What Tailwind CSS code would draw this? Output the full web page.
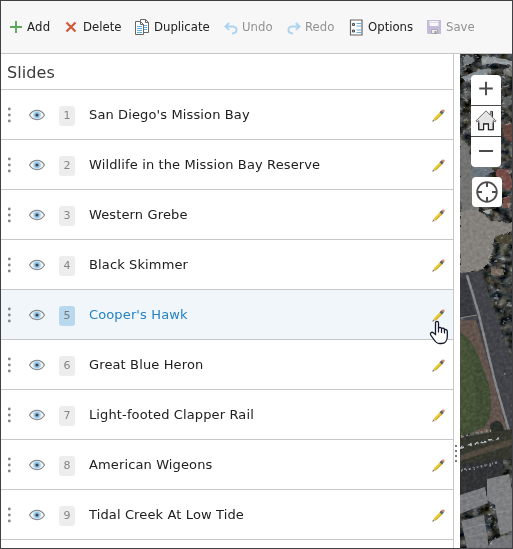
<!DOCTYPE html>
<html lang="en">
<head>
<meta charset="utf-8">
<title>Slides</title>
<script src="https://cdn.jsdelivr.net/npm/@tailwindcss/browser@4"></script>
</head>
<body class="w-[513px] h-[549px] overflow-hidden bg-white">
<svg width="0" height="0" class="absolute">
  <symbol id="dots" viewBox="0 0 4 16"><g fill="#858585"><circle cx="2.300" cy="2" r="1.400"/><circle cx="2.300" cy="8" r="1.400"/><circle cx="2.300" cy="14" r="1.400"/></g></symbol>
  <symbol id="eye" viewBox="0 0 18 14"><path d="M1.500 7C5 .8 13 .8 16.500 7C13 13.200 5 13.200 1.500 7Z" fill="#fafafa" stroke="#858585" stroke-width="1.100"/><circle cx="9" cy="7" r="4.200" fill="#b9dcf3"/><circle cx="9" cy="7" r="2.900" fill="#92c5e9"/><circle cx="9" cy="7" r="1.600" fill="#454545"/></symbol>
  <symbol id="pencil" viewBox="0 0 14 14"><path d="M.6 13.400L2 9.900L4.200 12Z" fill="#d9b9a0"/><path d="M.4 13.600L1.200 11.600L2.300 12.800Z" fill="#555"/><path d="M1.800 10.200L8.900 2.900L11.300 5.300L4.100 12.300Z" fill="#e6cc35"/><path d="M3.500 11.700L10.700 4.700L11.300 5.300L4.100 12.300Z" fill="#c9a92b"/><path d="M8.100 3.400L10.200 1.400L12.800 3.800L10.700 5.900Z" fill="#5b6270"/><path d="M10.200 1.400Q11.500 0 13.100 .8Q14.300 2 12.800 3.800Z" fill="#e08766"/></symbol>
</svg>
<div class="w-[513px] h-[549px] border border-[#414045] flex flex-col text-[#212121] [font-family:'DejaVu_Sans',Verdana,sans-serif]">
  <header class="h-[53px] shrink-0 bg-[#f7f7f7] border-b border-[#c6c6c6] flex items-center text-[13px] pl-2 [font-family:'DejaVu_Sans_Condensed','DejaVu_Sans',sans-serif] [font-stretch:condensed] whitespace-nowrap">
    <div class="w-[56px] flex items-center tracking-[.3px]"><svg class="w-[14px] h-[14px] mr-[4px] shrink-0" viewBox="0 0 14 14"><path d="M7 1V13M1 7H13" stroke="#59a85c" stroke-width="1.900"/></svg>Add</div>
    <div class="w-[69px] flex items-center"><svg class="w-[12px] h-[12px] mr-[6px] shrink-0" viewBox="0 0 12 12"><path d="M1.500 1.500L10.500 10.500M10.500 1.500L1.500 10.500" stroke="#cf5b3c" stroke-width="2.300"/></svg>Delete</div>
    <div class="w-[90px] flex items-center"><svg class="w-[16px] h-[18px] mr-[4px] shrink-0" viewBox="0 0 16 18"><path d="M6.500 1.500H11.500L14.500 4.500V14.500H6.500Z" fill="#fff" stroke="#666"/><path d="M11.500 1.500V4.500H14.500" fill="none" stroke="#666"/><path d="M10 7.500H13M10 9.500H13M10 11.500H13" stroke="#62aee0"/><path d="M1.500 3.500H6.500L9.500 6.500V16.500H1.500Z" fill="#fff" stroke="#666"/><path d="M6.500 3.500V6.500H9.500" fill="none" stroke="#666"/><path d="M3 8.500H8M3 10.500H8M3 12.500H8M3 14.500H8" stroke="#62aee0"/></svg>Duplicate</div>
    <div class="w-[63px] flex items-center text-[#929292]"><svg class="w-[14px] h-[13px] mr-[4px] mt-[2px] shrink-0" viewBox="0 0 15 14"><path d="M5.500 1L1.500 4.800L5.500 8.500M2 4.800H9.500C15 5 15 12.300 8.500 12.300" fill="none" stroke="#acd3ef" stroke-width="2.100"/></svg>Undo</div>
    <div class="w-[62px] flex items-center text-[#929292]"><svg class="w-[14px] h-[13px] mr-[4px] mt-[2px] shrink-0" viewBox="0 0 15 14"><path d="M9.500 1L13.500 4.800L9.500 8.500M13 4.800H5.500C0 5 0 12.300 6.500 12.300" fill="none" stroke="#acd3ef" stroke-width="2.100"/></svg>Redo</div>
    <div class="w-[78px] flex items-center"><svg class="w-[14px] h-[17px] mr-[5px] shrink-0" viewBox="0 0 14 17"><path d="M1.500 1H13V16H1.500Z" fill="#fff" stroke="#666" stroke-width="1.200"/><path d="M3.500 4.500h2v2h-2zM3.500 11h2v2h-2z" fill="#aaa" stroke="#555"/><path d="M7.500 4.500H12M7.500 7H12M7.500 11H12M7.500 13.500H12" stroke="#62aee0"/></svg>Options</div>
    <div class="flex items-center text-[#929292]"><svg class="w-[14px] h-[14px] mr-[5px] shrink-0" viewBox="0 0 14 14"><path d="M0 0H14V14H1L0 13Z" fill="#c5b9dd"/><path d="M2.500 1H11.500V6H2.500Z" fill="#f7f7f7"/><path d="M2.500 2.500H11.500" stroke="#ddd"/><path d="M4 9H11V14H4Z" fill="#eee"/><path d="M4.500 9.500H10.500V13.500H4.500Z" fill="none" stroke="#aaa"/><path d="M7.500 11H9.500V14H7.500Z" fill="#999"/></svg>Save</div>
  </header>
  <div class="flex flex-1 min-h-0">
    <section class="w-[453px] border-r border-[#c8c8c8] shrink-0 overflow-hidden">
      <h1 class="h-[36px] border-b border-[#c8c8c8] pl-[6px] text-[16px] leading-[37px] tracking-[.1px] text-[#3b3b3b]">Slides</h1>
      <ul id="slides"></ul>
    </section>
    <div class="w-[6px] shrink-0 flex flex-col pl-[1px] justify-end pb-[86px] gap-[3px]">
      <i class="w-[2px] h-[2px] shrink-0 bg-[#777]"></i><i class="w-[2px] h-[2px] shrink-0 bg-[#777]"></i><i class="w-[2px] h-[2px] shrink-0 bg-[#777]"></i><i class="w-[2px] h-[2px] shrink-0 bg-[#777]"></i>
    </div>
    <div class="relative flex-1 overflow-hidden bg-[#353a37]">
      <svg class="block w-[52px] h-[494px]" viewBox="460 54 52 494">
        <defs>
          <filter id="grain" x="0" y="0" width="100%" height="100%" color-interpolation-filters="sRGB"><feTurbulence type="fractalNoise" baseFrequency=".3" numOctaves="3" seed="8"/><feColorMatrix values="1.400 0 0 0 -.2  1.400 0 0 0 -.2  1.400 0 0 0 -.2  0 0 0 0 1"/><feComposite in2="SourceGraphic" operator="in"/></filter>
          <filter id="canopy" x="0" y="0" width="100%" height="100%" color-interpolation-filters="sRGB"><feTurbulence type="fractalNoise" baseFrequency=".11 .13" numOctaves="4" seed="12"/><feColorMatrix values=".75 .2 0 0 -.26  .75 .1 0 0 -.2  .75 0 .12 0 -.22  0 0 0 0 1"/><feComposite in2="SourceGraphic" operator="in"/></filter>
          <filter id="glint" x="0" y="0" width="100%" height="100%" color-interpolation-filters="sRGB"><feTurbulence type="fractalNoise" baseFrequency=".16 .26" numOctaves="3" seed="21"/><feColorMatrix values="0 0 0 0 .7  0 0 0 0 .72  0 0 0 0 .74  8 0 0 0 -5"/><feComposite in2="SourceGraphic" operator="in"/></filter>
          <filter id="rough" x="-10%" y="-10%" width="120%" height="120%"><feTurbulence type="fractalNoise" baseFrequency=".15" numOctaves="2"/><feDisplacementMap in="SourceGraphic" scale="4" xChannelSelector="R" yChannelSelector="G"/></filter>
        </defs>
        <path d="M460 54H512V548H460Z" fill="#303632"/>
        <path d="M460 54H512V548H460Z" filter="url(#canopy)"/>
        <g filter="url(#rough)">
          <path d="M462 57L472 56L475 61L464 66Z" fill="#747b80"/>
          <path d="M482 56L512 60V66L495 63L483 65Z" fill="#929899"/>
          <path d="M462 77L484 68L491 69L491 73L465 82Z" fill="#858c92"/>
          <path d="M503 68H512V77L504 74Z" fill="#757571"/>
          <path d="M502 97L511 95V105L504 106Z" fill="#5c6060"/>
          <path d="M460 137L468 145L480 211L464 222L460 202Z" fill="#737372"/>
          <path d="M471 167L488 162L494 172L474 181Z" fill="#69737c"/>
          <path d="M494 171L508 168L512 180V190L501 187Z" fill="#754c46"/>
          <path d="M503 124H512V142L504 139Z" fill="#63443e"/>
          <path d="M502 198L511 196V207L505 208Z" fill="#754f45"/>
          <path d="M460 212L478 208L490 221L512 223V231L494 239L492 254L483 270L460 274Z" fill="#85827d"/>
          <path d="M482 211L491 209L489 215Z" fill="#aaa"/>
          <path d="M494 238Q505 231 512 235V244H499Z" fill="#4a4535"/>
          <path d="M491 267L503 268L504 276L491 275Z" fill="#77685c"/>
        </g>
        <path d="M460 273L481 271L495 311L512 362V438L489 372L460 305Z" fill="#424348"/>
        <path d="M495 311L512 362V285L490 275Z" fill="#2d332f"/>
        <path d="M495 311L512 362V285L490 275Z" filter="url(#canopy)" opacity=".8"/>
        <path d="M460 276L466 277L476 317L460 318Z" fill="#383a40"/>
        <path d="M460 321L476 320L508 433H460Z" fill="#62544c"/>
        <path d="M460 332Q472 340 478 355L489 385Q496 426 478 430L460 437Z" fill="#414e35"/>
        <path d="M460 335Q470 345 473 365T476 406T460 428Z" fill="#475337"/>
        <path d="M467 275L479 315L494 378L511 438" fill="none" stroke="#868689" stroke-width="2.500"/>
        <path d="M460 318L477 315" stroke="#8b8a84"/>
        <path d="M490 425Q497 417 502 424L506 433L489 435Z" fill="#292e2a"/>
        <path d="M460 438L512 429V458L460 469Z" fill="#35372f"/>
        <path d="M460 455L512 439V445L460 461Z" fill="#50493e"/>
        <path d="M460 465L503 458V482L460 495Z" fill="#303234"/>
        <g filter="url(#rough)">
          <path d="M461 436L482 432L492 430" stroke="#91877b" stroke-width="2" stroke-dasharray="2 2" fill="none"/>
          <path d="M461 447L480 443L500 438" stroke="#b1b7bc" stroke-width="2" stroke-dasharray="4 3" fill="none"/>
          <path d="M461 471L500 462" stroke="#858b8d" stroke-width="2" stroke-dasharray="2 2" fill="none"/>
        </g>
        <path d="M487 479L509 474L512 490V531L500 535L495 505L487 500Z" fill="#7d7f81"/>
        <path d="M460 495L485 487L488 503L460 514Z" fill="#797b7e"/>
        <path d="M461 521L484 515L489 548H467Z" fill="#77797c"/>
        <path d="M492 540L512 534V548H487Z" fill="#737578"/>
        <g stroke="#929496" stroke-width=".6" fill="none"><path d="M460 500L487 492M460 507L487 499M490 491L510 487M492 500L511 497M497 513L512 510M465 529L485 524M467 537L486 533"/></g>
        <path d="M480 54H512V210H480ZM460 54H480V135H460ZM488 236H512V330L503 340L488 272ZM486 503H496V545H486ZM502 360L512 382V425Z" filter="url(#glint)" opacity=".55"/>
        <path d="M460 54H512V548H460Z" filter="url(#grain)" opacity=".22" class="mix-blend-soft-light"/>
      </svg>
      <div class="absolute left-[11px] top-[21px] w-[30px] h-[92px] rounded-[4px] bg-white flex flex-col divide-y divide-[#484848]">
        <svg class="w-[30px] h-[31px]" viewBox="0 0 30 31"><path d="M15 7V21M8 14H22" stroke="#4b4b4b" stroke-width="2"/></svg>
        <svg class="w-[30px] h-[31px]" viewBox="0 0 30 31"><path d="M4.500 15.500L15 5L19.500 9.500V5.500H21.500V11.500L25.500 15.500L24.500 16.500L22.500 15V24.500H17.500V18.500H12.500V24.500H7.500V15L5.500 16.500Z" fill="#e5e5e5" stroke="#666" stroke-width="1"/><path d="M7.500 17V24.500H12.500V18.500H17.500V24.500H22.500V17M21.500 5.500V11" fill="none" stroke="#222" stroke-width="1.200"/></svg>
        <svg class="w-[30px] h-[30px]" viewBox="0 0 30 30"><path d="M8 14H22" stroke="#4b4b4b" stroke-width="2"/></svg>
      </div>
      <div class="absolute left-[12px] top-[123px] w-[30px] h-[30px] rounded-[4px] bg-white"><svg viewBox="0 0 30 30"><circle cx="15" cy="15" r="9.800" fill="none" stroke="#4c4c4c" stroke-width="1.800"/><path d="M15 5V10M15 20V25M5 15H10M20 15H25" stroke="#4c4c4c" stroke-width="2"/></svg></div>
    </div>
  </div>
</div>
<svg class="absolute left-[429px] top-[319px] w-[20px] h-[26px]" viewBox="0 0 20 26"><path d="M6.500 15.500V4C6.500 1.700 9.500 1.700 9.500 4V9.500C10 7.800 12.500 8 12.500 10C13.200 8.500 15.500 9 15.500 11C16.500 9.800 18.300 10.500 18.300 12.500V17.500C18.300 21.500 16 24.500 12.500 24.500H10.500C7.500 24.500 6 22.500 4.500 20L1.700 16C.7 14.200 2.600 12.500 4.300 13.700Z" fill="#fff" stroke="#15182a" stroke-width="1.300"/><path d="M9.500 9V13.500M12.500 10V14M15.500 11V14.500" stroke="#15182a" stroke-width="1.200"/></svg>
<script>
const titles = ["San Diego's Mission Bay", "Wildlife in the Mission Bay Reserve", "Western Grebe", "Black Skimmer", "Cooper's Hawk", "Great Blue Heron", "Light-footed Clapper Rail", "American Wigeons", "Tidal Creek At Low Tide"];
document.getElementById("slides").innerHTML = titles.map((t, i) => {
  const on = i === 4;
  return `<li class="h-[50px] border-b border-[#c8c8c8] flex items-center pl-[6px] pr-[8px] ${on ? "bg-[#f0f6f9]" : "bg-white"}">
    <svg class="w-[4px] h-[16px] shrink-0"><use href="#dots"/></svg>
    <svg class="w-[18px] h-[14px] ml-[17px] shrink-0"><use href="#eye"/></svg>
    <span class="w-[16px] h-[20px] ml-[13px] mt-[3px] shrink-0 rounded-[3px] text-[11px] leading-[20px] text-center ${on ? "bg-[#b8d8ed] text-[#777]" : "bg-[#ededed] text-[#858585]"}">${i + 1}</span>
    <span class="flex-1 ml-[14px] text-[13px] tracking-[.13px] whitespace-nowrap ${on ? "text-[#2582c5]" : "text-[#202020]"}">${t}</span>
    <svg class="w-[13px] h-[13px] mt-[2px] shrink-0"><use href="#pencil"/></svg>
  </li>`;
}).join("");
</script>
</body>
</html>
